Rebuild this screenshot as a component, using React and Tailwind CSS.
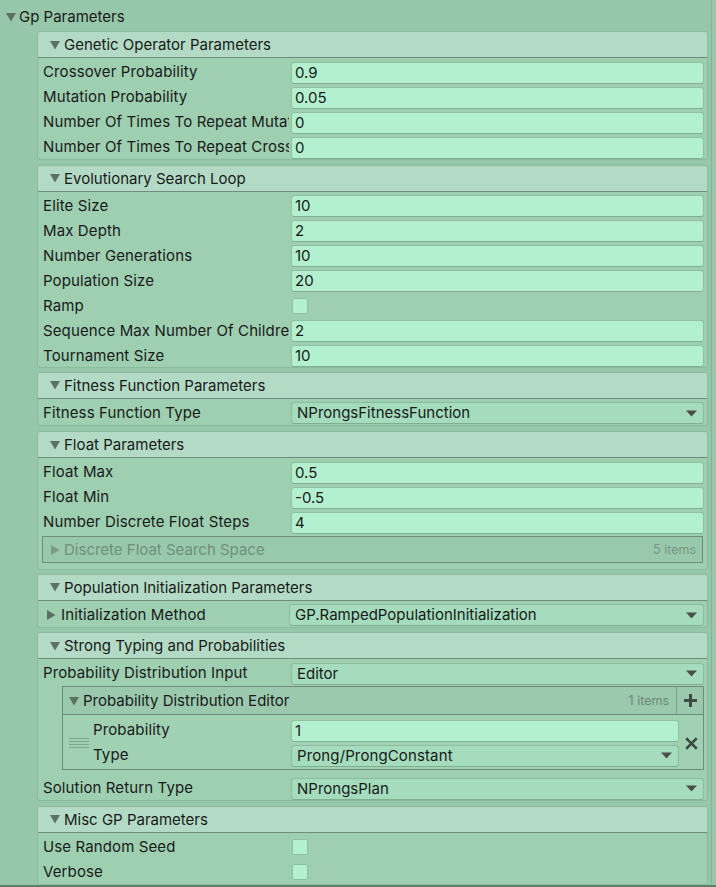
import React from 'react';

const Tri = ({ dir = 'down', className = '' }) => (
    <svg width="10" height="10" viewBox="0 0 10 10" className={className}>
        <path d={dir === 'down' ? 'M0 1 H10 L5 9.5 Z' : 'M1 0 V10 L9.5 5 Z'} fill="currentColor" />
    </svg>
);

const Arrow = () => (
    <svg width="11" height="7" viewBox="0 0 11 7" className="text-[#4a4f4c]">
        <path d="M0 0.5 H11 L5.5 6.5 Z" fill="currentColor" />
    </svg>
);

const Field = ({ value }) => (
    <div className="h-[22px] bg-[#b3f0cf] border border-[#8fc0a2] border-b-[#82b094] rounded-[3px] pl-[3px] pb-[1px] flex items-center whitespace-nowrap overflow-hidden">
        {value}
    </div>
);

const Dropdown = ({ value, className = '' }) => (
    <div className={`h-[22px] bg-[#a4dcbd] border border-[#8cbc9e] border-b-[#7fae91] rounded-[3px] pl-[5px] pr-[6px] flex items-center justify-between whitespace-nowrap ${className}`}>
        <span className="pb-[1px]">{value}</span>
        <Arrow />
    </div>
);

const Check = () => (
    <div className="ml-[1px] w-[16px] h-[16px] bg-[#b3f0cf] border border-[#8dbfa0] rounded-[2px]" />
);

const Row = ({ label, children, foldout }) => (
    <div className="h-[25px] flex items-center">
        <div className="w-[251px] mr-[2px] shrink-0 pl-[5px] overflow-hidden whitespace-nowrap flex items-center tracking-[0.12px]">
            {foldout && <Tri dir="right" className="text-[#5c7163] mr-[5px] ml-[3px] shrink-0" />}
            <span className="pb-[2px]">{label}</span>
        </div>
        <div className="flex-1 pr-[3px]">{children}</div>
    </div>
);

const Section = ({ title, children, className = '' }) => (
    <div className={`mr-[3px] ml-[37px] border border-[#8bba9d] rounded-[3px] bg-[#9ecfb1] overflow-hidden ${className}`}>
        <div className="h-[26px] bg-[#b3dac5] border-b border-[#6f8d7b] flex items-center pl-[12px]">
            <Tri className="text-[#5c7163] mr-[4px]" />
            <span>{title}</span>
        </div>
        <div className="pt-[2px]">{children}</div>
    </div>
);

export default function App() {
    return (
        <div className="w-[716px] h-[887px] overflow-hidden bg-[#97c7aa] border-b-2 border-[#5f7f6b] flex font-['Inter',sans-serif] text-[15px] text-[#181a19] leading-none">
            <div className="w-[711px] flex flex-col">
                <div className="h-[31px] shrink-0 flex items-center pl-[6px] pt-[2px]">
                    <Tri className="text-[#5c7163] mr-[3px]" />
                    <span>Gp Parameters</span>
                </div>

                <Section title="Genetic Operator Parameters">
                    <Row label="Crossover Probability"><Field value="0.9" /></Row>
                    <Row label="Mutation Probability"><Field value="0.05" /></Row>
                    <Row label="Number Of Times To Repeat Mutation"><Field value="0" /></Row>
                    <Row label="Number Of Times To Repeat Crossover"><Field value="0" /></Row>
                </Section>

                <Section title="Evolutionary Search Loop" className="mt-[5px]">
                    <Row label="Elite Size"><Field value="10" /></Row>
                    <Row label="Max Depth"><Field value="2" /></Row>
                    <Row label="Number Generations"><Field value="10" /></Row>
                    <Row label="Population Size"><Field value="20" /></Row>
                    <Row label="Ramp"><Check /></Row>
                    <Row label="Sequence Max Number Of Children"><Field value="2" /></Row>
                    <Row label="Tournament Size"><Field value="10" /></Row>
                </Section>

                <Section title="Fitness Function Parameters" className="mt-[4px]">
                    <Row label="Fitness Function Type"><Dropdown value="NProngsFitnessFunction" /></Row>
                </Section>

                <Section title="Float Parameters" className="mt-[5px]">
                    <Row label="Float Max"><Field value="0.5" /></Row>
                    <Row label="Float Min"><Field value="-0.5" /></Row>
                    <Row label="Number Discrete Float Steps"><Field value="4" /></Row>
                    <div className="mt-[1px] mb-[7px] ml-[4px] mr-[4px] h-[27px] border border-[#6e8f7a] bg-[#99c9ac] flex items-center pl-[7px] pr-[6px] text-[#6f8f7b]">
                        <Tri dir="right" className="text-[#7d9c88] mr-[4px]" />
                        <span className="flex-1 pb-[1px]">Discrete Float Search Space</span>
                        <span className="text-[12.5px] text-[#789884]">5 items</span>
                    </div>
                </Section>

                <Section title="Population Initialization Parameters" className="mt-[4px]">
                    <Row label="Initialization Method" foldout>
                        <Dropdown value="GP.RampedPopulationInitialization" className="-ml-[2px]" />
                    </Row>
                </Section>

                <Section title="Strong Typing and Probabilities" className="mt-[4px]">
                    <Row label="Probability Distribution Input"><Dropdown value="Editor" /></Row>
                    <div className="ml-[24px] mr-[3px] border border-[#6e8c79]">
                        <div className="h-[28px] bg-[#9bc9ad] border-b border-[#6e8c79] flex items-center">
                            <div className="flex-1 flex items-center pl-[6px]">
                                <Tri className="text-[#5c7163] mr-[4px]" />
                                <span>Probability Distribution Editor</span>
                            </div>
                            <span className="text-[12.5px] text-[#6b8b77] pr-[7px]">1 items</span>
                            <div className="w-[27px] h-full border-l border-[#7f9f8b] flex items-center justify-center">
                                <svg width="13" height="13" viewBox="0 0 13 13" className="text-[#3f4a44]">
                                    <path d="M5 0 H8 V5 H13 V8 H8 V13 H5 V8 H0 V5 H5 Z" fill="currentColor" />
                                </svg>
                            </div>
                        </div>
                        <div className="bg-[#a0d1b3] pt-[3px] pb-[1px] flex items-center">
                            <div className="w-[30px] shrink-0 flex flex-col gap-[2px] pl-[6px] pr-[4px]">
                                <div className="h-px bg-[#7fa38c]" />
                                <div className="h-px bg-[#7fa38c]" />
                                <div className="h-px bg-[#7fa38c]" />
                                <div className="h-px bg-[#7fa38c]" />
                            </div>
                            <div className="flex-1 flex flex-col tracking-[0.12px]">
                                <div className="h-[25px] flex items-center">
                                    <div className="w-[198px] shrink-0 pb-[2px]">Probability</div>
                                    <div className="flex-1"><Field value="1" /></div>
                                </div>
                                <div className="h-[25px] flex items-center">
                                    <div className="w-[198px] shrink-0 pb-[2px]">Type</div>
                                    <div className="flex-1"><Dropdown value="Prong/ProngConstant" className="pl-[3px]" /></div>
                                </div>
                            </div>
                            <div className="w-[24px] shrink-0 flex justify-center">
                                <svg width="13" height="13" viewBox="0 0 12 12" className="text-[#3f4a44]">
                                    <path d="M2 0.3 L6 4.3 L10 0.3 L11.7 2 L7.7 6 L11.7 10 L10 11.7 L6 7.7 L2 11.7 L0.3 10 L4.3 6 L0.3 2 Z" fill="currentColor" />
                                </svg>
                            </div>
                        </div>
                    </div>
                    <div className="mt-[6px]">
                        <Row label="Solution Return Type"><Dropdown value="NProngsPlan" /></Row>
                    </div>
                </Section>

                <Section title="Misc GP Parameters" className="mt-[5px]">
                    <Row label="Use Random Seed"><Check /></Row>
                    <Row label="Verbose"><Check /></Row>
                </Section>
            </div>
            <div className="w-px bg-[#86b596]" />
            <div className="flex-1" />
        </div>
    );
}
